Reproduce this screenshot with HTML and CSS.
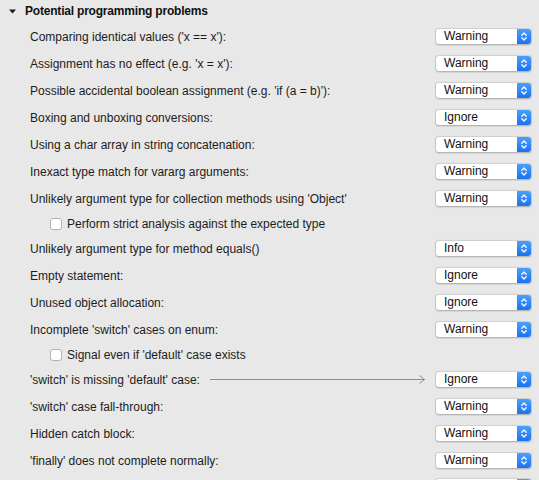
FILE: index.html
```html
<!DOCTYPE html>
<html>
<head>
<meta charset="utf-8">
<link rel="stylesheet" href="styles.css">
</head>
<body>
<div class="panel">
  <div class="header">
    <svg class="tri" width="7" height="5" viewBox="0 0 7 5"><path d="M0 0.5 L7 0.5 L3.5 4.5 Z" fill="#1a1a1a"/></svg>
    <span>Potential programming problems</span>
  </div>

  <div class="row"><span class="label">Comparing identical values ('x == x'):</span><div class="select"><span class="val">Warning</span><span class="stepper"><svg width="8" height="11" viewBox="0 0 8 11"><path d="M1.8 4.2 L4 2 L6.2 4.2 M1.8 6.8 L4 9 L6.2 6.8" fill="none" stroke="#fff" stroke-width="1.3" stroke-linecap="round" stroke-linejoin="round"/></svg></span></div></div>
  <div class="row"><span class="label">Assignment has no effect (e.g. 'x = x'):</span><div class="select"><span class="val">Warning</span><span class="stepper"><svg width="8" height="11" viewBox="0 0 8 11"><path d="M1.8 4.2 L4 2 L6.2 4.2 M1.8 6.8 L4 9 L6.2 6.8" fill="none" stroke="#fff" stroke-width="1.3" stroke-linecap="round" stroke-linejoin="round"/></svg></span></div></div>
  <div class="row"><span class="label">Possible accidental boolean assignment (e.g. 'if (a = b)'):</span><div class="select"><span class="val">Warning</span><span class="stepper"><svg width="8" height="11" viewBox="0 0 8 11"><path d="M1.8 4.2 L4 2 L6.2 4.2 M1.8 6.8 L4 9 L6.2 6.8" fill="none" stroke="#fff" stroke-width="1.3" stroke-linecap="round" stroke-linejoin="round"/></svg></span></div></div>
  <div class="row"><span class="label">Boxing and unboxing conversions:</span><div class="select"><span class="val">Ignore</span><span class="stepper"><svg width="8" height="11" viewBox="0 0 8 11"><path d="M1.8 4.2 L4 2 L6.2 4.2 M1.8 6.8 L4 9 L6.2 6.8" fill="none" stroke="#fff" stroke-width="1.3" stroke-linecap="round" stroke-linejoin="round"/></svg></span></div></div>
  <div class="row"><span class="label">Using a char array in string concatenation:</span><div class="select"><span class="val">Warning</span><span class="stepper"><svg width="8" height="11" viewBox="0 0 8 11"><path d="M1.8 4.2 L4 2 L6.2 4.2 M1.8 6.8 L4 9 L6.2 6.8" fill="none" stroke="#fff" stroke-width="1.3" stroke-linecap="round" stroke-linejoin="round"/></svg></span></div></div>
  <div class="row"><span class="label">Inexact type match for vararg arguments:</span><div class="select"><span class="val">Warning</span><span class="stepper"><svg width="8" height="11" viewBox="0 0 8 11"><path d="M1.8 4.2 L4 2 L6.2 4.2 M1.8 6.8 L4 9 L6.2 6.8" fill="none" stroke="#fff" stroke-width="1.3" stroke-linecap="round" stroke-linejoin="round"/></svg></span></div></div>
  <div class="row"><span class="label">Unlikely argument type for collection methods using 'Object'</span><div class="select"><span class="val">Warning</span><span class="stepper"><svg width="8" height="11" viewBox="0 0 8 11"><path d="M1.8 4.2 L4 2 L6.2 4.2 M1.8 6.8 L4 9 L6.2 6.8" fill="none" stroke="#fff" stroke-width="1.3" stroke-linecap="round" stroke-linejoin="round"/></svg></span></div></div>
  <div class="check-row"><span class="box"></span><span class="label">Perform strict analysis against the expected type</span></div>
  <div class="row"><span class="label">Unlikely argument type for method equals()</span><div class="select"><span class="val">Info</span><span class="stepper"><svg width="8" height="11" viewBox="0 0 8 11"><path d="M1.8 4.2 L4 2 L6.2 4.2 M1.8 6.8 L4 9 L6.2 6.8" fill="none" stroke="#fff" stroke-width="1.3" stroke-linecap="round" stroke-linejoin="round"/></svg></span></div></div>
  <div class="row"><span class="label">Empty statement:</span><div class="select"><span class="val">Ignore</span><span class="stepper"><svg width="8" height="11" viewBox="0 0 8 11"><path d="M1.8 4.2 L4 2 L6.2 4.2 M1.8 6.8 L4 9 L6.2 6.8" fill="none" stroke="#fff" stroke-width="1.3" stroke-linecap="round" stroke-linejoin="round"/></svg></span></div></div>
  <div class="row"><span class="label">Unused object allocation:</span><div class="select"><span class="val">Ignore</span><span class="stepper"><svg width="8" height="11" viewBox="0 0 8 11"><path d="M1.8 4.2 L4 2 L6.2 4.2 M1.8 6.8 L4 9 L6.2 6.8" fill="none" stroke="#fff" stroke-width="1.3" stroke-linecap="round" stroke-linejoin="round"/></svg></span></div></div>
  <div class="row"><span class="label">Incomplete 'switch' cases on enum:</span><div class="select"><span class="val">Warning</span><span class="stepper"><svg width="8" height="11" viewBox="0 0 8 11"><path d="M1.8 4.2 L4 2 L6.2 4.2 M1.8 6.8 L4 9 L6.2 6.8" fill="none" stroke="#fff" stroke-width="1.3" stroke-linecap="round" stroke-linejoin="round"/></svg></span></div></div>
  <div class="check-row"><span class="box"></span><span class="label">Signal even if 'default' case exists</span></div>
  <div class="row"><span class="label fixed">'switch' is missing 'default' case:</span><span class="arrow"><span class="line"></span><svg width="6" height="9" viewBox="0 0 6 9"><path d="M0.5 0.5 L5.3 4.5 L0.5 8.5" fill="none" stroke="#8e8e8e" stroke-width="1"/></svg></span><div class="select"><span class="val">Ignore</span><span class="stepper"><svg width="8" height="11" viewBox="0 0 8 11"><path d="M1.8 4.2 L4 2 L6.2 4.2 M1.8 6.8 L4 9 L6.2 6.8" fill="none" stroke="#fff" stroke-width="1.3" stroke-linecap="round" stroke-linejoin="round"/></svg></span></div></div>
  <div class="row"><span class="label">'switch' case fall-through:</span><div class="select"><span class="val">Warning</span><span class="stepper"><svg width="8" height="11" viewBox="0 0 8 11"><path d="M1.8 4.2 L4 2 L6.2 4.2 M1.8 6.8 L4 9 L6.2 6.8" fill="none" stroke="#fff" stroke-width="1.3" stroke-linecap="round" stroke-linejoin="round"/></svg></span></div></div>
  <div class="row"><span class="label">Hidden catch block:</span><div class="select"><span class="val">Warning</span><span class="stepper"><svg width="8" height="11" viewBox="0 0 8 11"><path d="M1.8 4.2 L4 2 L6.2 4.2 M1.8 6.8 L4 9 L6.2 6.8" fill="none" stroke="#fff" stroke-width="1.3" stroke-linecap="round" stroke-linejoin="round"/></svg></span></div></div>
  <div class="row"><span class="label">'finally' does not complete normally:</span><div class="select"><span class="val">Warning</span><span class="stepper"><svg width="8" height="11" viewBox="0 0 8 11"><path d="M1.8 4.2 L4 2 L6.2 4.2 M1.8 6.8 L4 9 L6.2 6.8" fill="none" stroke="#fff" stroke-width="1.3" stroke-linecap="round" stroke-linejoin="round"/></svg></span></div></div>
  <div class="row last"><span class="label"></span><div class="select"><span class="val"></span><span class="stepper"></span></div></div>
</div>
</body>
</html>
```
FILE: styles.css
```css
html, body {
  margin: 0;
  padding: 0;
  background: #e8e8e8;
  height: 480px;
  overflow: hidden;
}
.panel {
  font-family: "Liberation Sans", Arial, sans-serif;
  font-size: 12px;
  color: #1c1c1c;
  display: flex;
  flex-direction: column;
}
.header {
  height: 23px;
  display: flex;
  align-items: center;
  padding-left: 9px;
  padding-bottom: 1px;
  box-sizing: border-box;
  font-weight: bold;
  font-size: 12px;
  letter-spacing: -0.2px;
  color: #111;
}
.tri {
  margin-right: 9px;
}
.row {
  height: 27px;
  display: flex;
  align-items: center;
  padding-left: 30px;
  padding-right: 7px;
}
.row .label {
  flex: 1;
  white-space: nowrap;
}
.row .label.fixed {
  flex: none;
}
.row.last {
  align-items: flex-start;
  padding-top: 4px;
  box-sizing: border-box;
}
.check-row {
  height: 23px;
  display: flex;
  align-items: center;
  padding-left: 50px;
}
.box {
  width: 10px;
  height: 10px;
  border: 1px solid #b3b3b3;
  border-radius: 3px;
  background: #fff;
  margin-right: 5px;
  box-shadow: 0 0.5px 0.5px rgba(0,0,0,0.05);
}
.arrow {
  flex: 1;
  display: flex;
  align-items: center;
  margin-left: 10px;
  margin-right: 10px;
}
.arrow .line {
  flex: 1;
  height: 1px;
  background: #8e8e8e;
  margin-right: -6px;
}
.select {
  width: 97px;
  height: 17px;
  box-sizing: border-box;
  border: 1px solid #c6c6c6;
  border-top-color: #d0d0d0;
  border-bottom-color: #b5b5b5;
  border-radius: 4px;
  background: #fff;
  display: flex;
  overflow: hidden;
  box-shadow: 0 0.5px 1px rgba(0,0,0,0.08);
}
.select .val {
  flex: 1;
  padding-left: 8px;
  line-height: 15px;
  font-size: 12px;
  color: #111;
}
.stepper {
  width: 14px;
  background: linear-gradient(#4aa0fb, #1a73f0);
  display: flex;
  align-items: center;
  justify-content: center;
}
```
